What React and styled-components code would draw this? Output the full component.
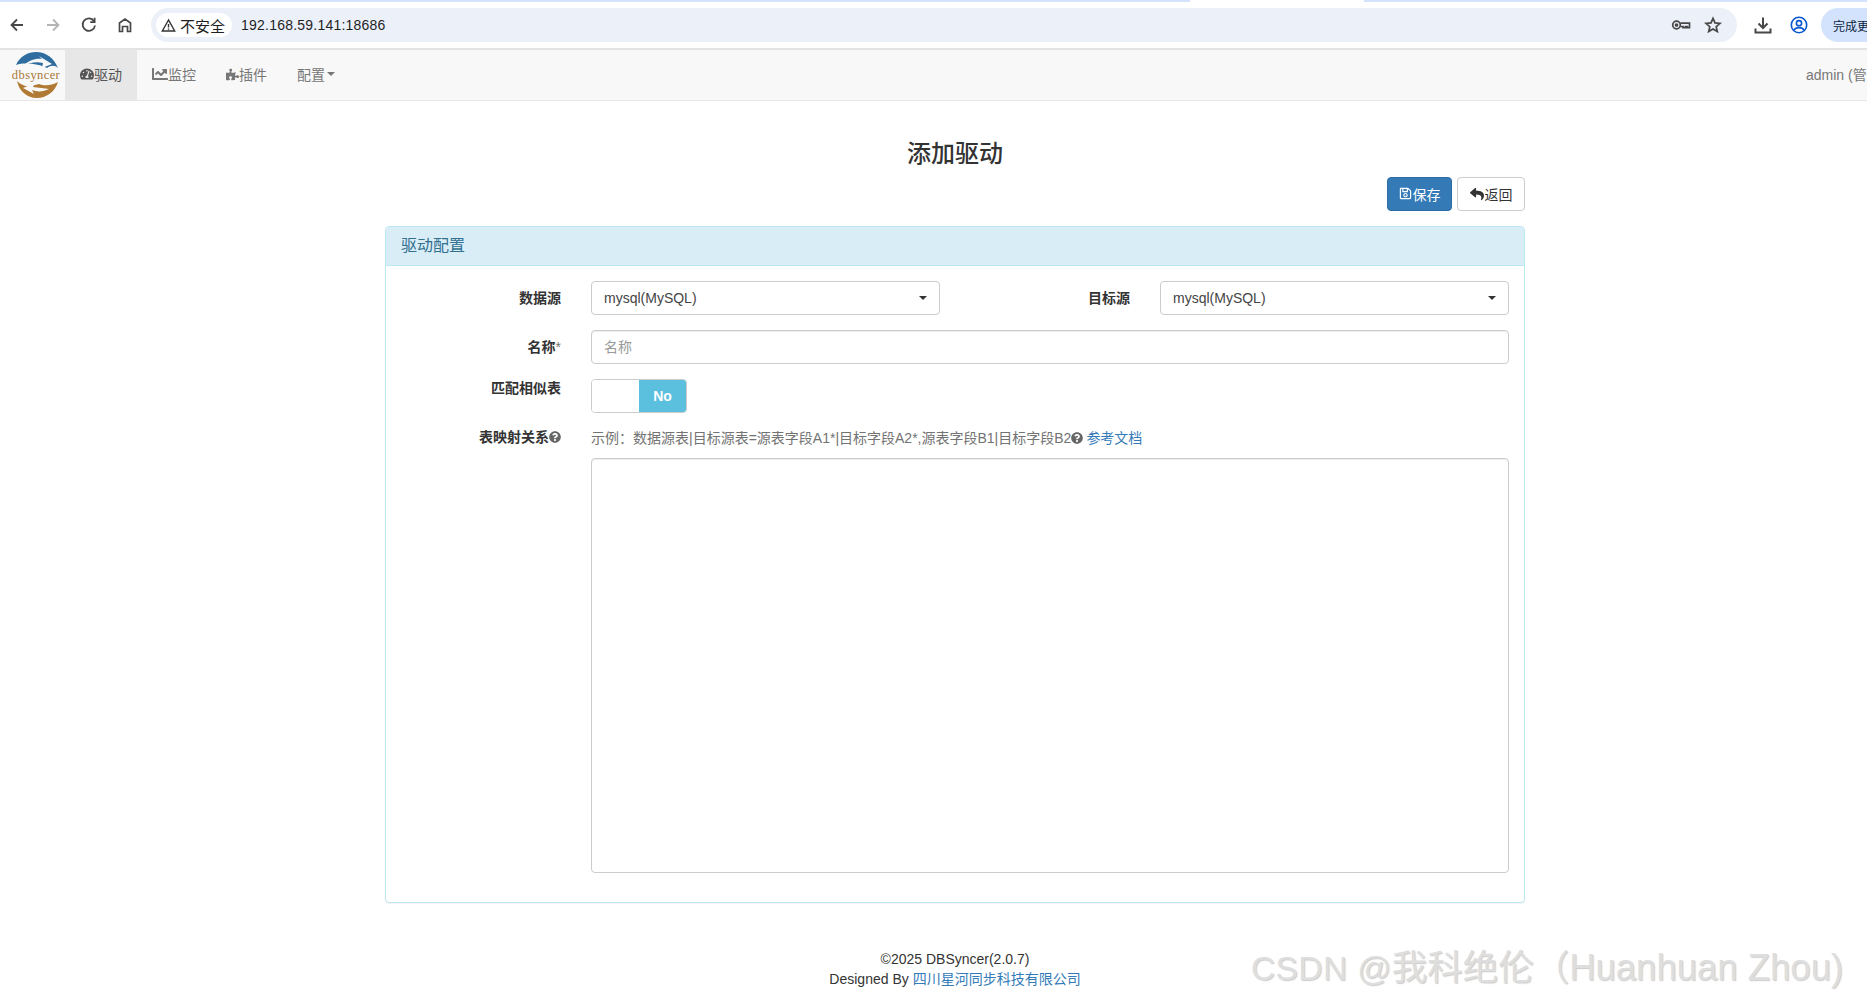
import React from "react";
import styled, { createGlobalStyle } from "styled-components";
import { FaTachometerAlt, FaChartLine, FaPuzzlePiece, FaRegSave, FaReply, FaQuestionCircle } from "react-icons/fa";

const FONT = `"Liberation Sans", "Noto Sans CJK SC", sans-serif`;

const GlobalStyle = createGlobalStyle`
  html, body {
    margin: 0;
    height: 1000px;
    overflow: hidden;
    background: #fff;
  }
  body {
    font-family: ${FONT};
    font-size: 14px;
    color: #333;
  }
  * {
    box-sizing: border-box;
  }
`;

const Page = styled.div`
  position: relative;
  width: 1867px;
  height: 1000px;
  overflow: hidden;
`;

/* browser chrome */
const TabStrip = styled.div`
  display: flex;
  height: 2px;
`;

const StripPart = styled.div`
  flex: ${(p) => p.$flex || "1"};
  background: ${(p) => p.$color || "#d3e3fd"};
`;

const Toolbar = styled.div`
  display: flex;
  align-items: center;
  height: 48px;
  border-bottom: 2px solid #e3e3e3;
  overflow: hidden;
`;

const NavButtons = styled.div`
  display: flex;
  margin-left: -1px;
`;

const ToolButton = styled.div`
  flex: 0 0 36px;
  display: flex;
  align-items: center;
  justify-content: center;
  color: ${(p) => p.$color || "#474747"};
`;

const AddressBar = styled.div`
  flex: 0 0 1586px;
  margin: 0 8px;
  height: 34px;
  border-radius: 17px;
  background: #ebf0f9;
  display: flex;
  align-items: center;
  padding: 0 8px 0 5px;
  color: #1f1f1f;
`;

const SecurityChip = styled.div`
  display: flex;
  align-items: center;
  gap: 4px;
  height: 24px;
  width: 76px;
  padding-left: 5px;
  border-radius: 12px;
  background: #fff;
  font-size: 15px;
  white-space: nowrap;
`;

const UrlText = styled.div`
  margin-left: 9px;
  font-size: 14px;
  letter-spacing: 0.22px;
  flex: 1;
`;

const AddressIcon = styled.div`
  width: 32px;
  display: flex;
  justify-content: center;
  color: #474747;
`;

const UpdatePill = styled.div`
  flex: 0 0 80px;
  height: 34px;
  margin-left: 4px;
  padding-left: 12px;
  display: flex;
  align-items: center;
  border-radius: 17px 0 0 17px;
  background: #d3e3fd;
  color: #0b1f3f;
  font-size: 12px;
  white-space: nowrap;
`;

/* app navbar */
const Navbar = styled.nav`
  display: flex;
  height: 51px;
  background: #f8f8f8;
  border-bottom: 1px solid #e7e7e7;
  overflow: hidden;
`;

const Brand = styled.div`
  flex: 0 0 65px;
  display: flex;
  align-items: center;
  padding-left: 11px;
`;

const NavItem = styled.div`
  display: flex;
  align-items: center;
  height: 50px;
  padding: 0 15px 2px;
  color: ${(p) => (p.$active ? "#555" : "#777")};
  background: ${(p) => (p.$active ? "#e7e7e7" : "transparent")};
  white-space: nowrap;
`;

const Caret = styled.span`
  width: 0;
  height: 0;
  margin-left: 2px;
  border-top: 4px solid #777;
  border-left: 4px solid transparent;
  border-right: 4px solid transparent;
`;

const UserName = styled.div`
  margin-left: auto;
  flex: 0 0 61px;
  min-width: 0;
  height: 50px;
  line-height: 50px;
  color: #777;
  white-space: nowrap;
`;

/* page */
const Main = styled.main`
  width: 1140px;
  margin-left: 385px;
`;

const Title = styled.h2`
  margin: 40px 0 0;
  font-size: 24px;
  font-weight: 500;
  line-height: 26px;
  text-align: center;
  color: #333;
`;

const Actions = styled.div`
  display: flex;
  justify-content: flex-end;
  gap: 5px;
  margin: 10px 0 15px;
`;

const Button = styled.button`
  display: flex;
  align-items: center;
  justify-content: center;
  gap: 1px;
  height: 34px;
  width: ${(p) => (p.$primary ? "65px" : "68px")};
  padding: 0 0 1px;
  border: 1px solid ${(p) => (p.$primary ? "#2e6da4" : "#ccc")};
  border-radius: 4px;
  background: ${(p) => (p.$primary ? "#337ab7" : "#fff")};
  color: ${(p) => (p.$primary ? "#fff" : "#333")};
  font-family: ${FONT};
  font-size: 14px;
`;

const Panel = styled.section`
  height: 677px;
  border: 1px solid #bce8f1;
  border-radius: 4px;
  background: #fff;
  box-shadow: 0 1px 1px rgba(0, 0, 0, 0.05);
`;

const PanelHeading = styled.div`
  height: 39px;
  padding: 0 0 4px 15px;
  display: flex;
  align-items: center;
  background: #d9edf7;
  border-bottom: 1px solid #bce8f1;
  border-radius: 3px 3px 0 0;
  color: #31708f;
  font-size: 16px;
`;

const PanelBody = styled.div`
  padding: 15px 15.5px 0 0;
  display: flex;
  flex-direction: column;
  gap: 15px;
`;

const Row = styled.div`
  display: flex;
  align-items: ${(p) => p.$align || "center"};
`;

const Label = styled.label`
  flex: 0 0 ${(p) => p.$width || "175px"};
  margin: -2px 30px 0 0;
  text-align: right;
  font-weight: 700;
  color: #333;
  white-space: nowrap;
`;

const Star = styled.span`
  font-weight: 400;
  color: #777;
`;

const Select = styled.div`
  flex: 0 0 ${(p) => p.$width || "auto"};
  flex-grow: ${(p) => (p.$width ? 0 : 1)};
  height: 34px;
  display: flex;
  align-items: center;
  justify-content: space-between;
  padding: 0 12px 0 12px;
  border: 1px solid #ccc;
  border-radius: 4px;
  color: #444;
`;

const SelectCaret = styled.span`
  width: 0;
  height: 0;
  border-top: 4px solid #333;
  border-left: 4px solid transparent;
  border-right: 4px solid transparent;
`;

const Input = styled.input`
  flex: 1;
  height: 34px;
  padding: 6px 12px;
  border: 1px solid #ccc;
  border-radius: 4px;
  font-family: ${FONT};
  font-size: 14px;
  box-shadow: inset 0 1px 1px rgba(0, 0, 0, 0.075);
  &::placeholder {
    color: #999;
  }
`;

const Switch = styled.div`
  display: flex;
  width: 96px;
  height: 34px;
  border: 1px solid #ccc;
  border-radius: 4px;
  overflow: hidden;
`;

const SwitchThumb = styled.div`
  flex: 0 0 47px;
  background: #fff;
`;

const SwitchOff = styled.div`
  flex: 1;
  display: flex;
  align-items: center;
  justify-content: center;
  background: #5bc0de;
  color: #fff;
  font-weight: 700;
`;

const MapBlock = styled.div`
  flex: 1;
  display: flex;
  flex-direction: column;
  gap: 10px;
`;

const Hint = styled.div`
  height: 20px;
  line-height: 20px;
  color: #737373;
  white-space: nowrap;
  display: flex;
  align-items: center;
`;

const HelpIcon = styled(FaQuestionCircle)`
  width: 12px;
  height: 12px;
  color: #666;
  vertical-align: -1px;
`;

const DocLink = styled.a`
  margin-left: 3px;
  color: #337ab7;
`;

const TextArea = styled.textarea`
  display: block;
  width: 100%;
  height: 415px;
  border: 1px solid #ccc;
  border-radius: 4px;
  resize: none;
  box-shadow: inset 0 1px 1px rgba(0, 0, 0, 0.075);
`;

const Footer = styled.footer`
  margin-top: 46px;
  text-align: center;
  line-height: 20px;
  color: #333;
`;

const FooterLink = styled.a`
  color: #337ab7;
`;

const Watermark = styled.div`
  position: absolute;
  left: 1251px;
  top: 946px;
  font-size: 33.5px;
  letter-spacing: 0.4px;
  line-height: 44px;
  color: #dedede;
  text-shadow: 1px 1px 1px rgba(110, 110, 110, 0.35);
  white-space: nowrap;
`;

const WatermarkCjk = styled.span`
  font-size: 35.5px;
  letter-spacing: 0;
`;

const WatermarkName = styled.span`
  font-size: 36.5px;
  letter-spacing: 0;
`;

const Logo = () => (
  <svg width="50" height="48" viewBox="0 0 50 48">
    <path d="M5 14C9 5 17 1 25 1c10 0 18 6 22 16-3-3-7-3-11 0-8-4-22-6-31-3z" fill="#2f6c9f" />
    <path d="M12 15c6-6 13-8 19-7l-3-3 13 8-10 4 1-5c-7-2-14 0-20 3z" fill="#f8f8f8" />
    <path d="M6 30c4 4 9 6 14 5l8-2c5 2 12 2 19-2-3 10-12 16-21 16-10 0-18-7-20-17z" fill="#b07a35" />
    <path d="M38 38c-6 3-12 3-17 1l2 4-11-6 12-5-2 4c5 1 11 1 16 2z" fill="#f8f8f8" />
    <text x="25" y="28" textAnchor="middle" fontFamily="Liberation Serif" fontSize="12.5" letterSpacing="0.4" fill="#a9773a">dbsyncer</text>
  </svg>
);

const BackIcon = ({ flip }) => (
  <svg width="18" height="18" viewBox="0 0 18 18" fill="none" stroke="currentColor" strokeWidth="1.8" transform={flip ? "scale(-1 1)" : undefined}>
    <path d="M15 9H3.500M9 3.500 3.500 9 9 14.500" />
  </svg>
);

const ReloadIcon = () => (
  <svg width="18" height="18" viewBox="0 0 18 18" fill="none" stroke="currentColor" strokeWidth="1.8">
    <path d="M14 5.200A6.200 6.200 0 1 0 15 9.500" />
    <path d="M14.600 1.800v4.400h-4.400" />
  </svg>
);

const HomeIcon = () => (
  <svg width="18" height="18" viewBox="0 0 18 18" fill="none" stroke="currentColor" strokeWidth="1.7">
    <path d="M3.500 15.500V7L9 3l5.500 4v8.500h-3V10.500h-5v5z" />
  </svg>
);

const WarnIcon = () => (
  <svg width="15" height="15" viewBox="0 0 15 15" fill="none" stroke="#333" strokeWidth="1.4">
    <path d="M7.500 2 1.300 13h12.400z" />
    <path d="M7.500 6v3.600M7.500 10.600v1.200" />
  </svg>
);

const KeyIcon = () => (
  <svg width="20" height="14" viewBox="0 0 20 14" fill="none" stroke="currentColor" strokeWidth="1.7">
    <circle cx="5.500" cy="7" r="3.800" />
    <circle cx="5.500" cy="7" r="1" fill="currentColor" />
    <path d="M9.300 5.200H18.500v4.500h-2.300V8.500h-1.700v1.200h-2.500V8.500H9.300" />
  </svg>
);

const StarIcon = () => (
  <svg width="18" height="18" viewBox="0 0 18 18" fill="none" stroke="currentColor" strokeWidth="1.7">
    <path d="m9 2.300 2 4.600 5 .5-3.800 3.300 1.100 4.900L9 13.100l-4.300 2.500 1.100-4.900L2 7.400l5-.5z" />
  </svg>
);

const DownloadIcon = () => (
  <svg width="18" height="18" viewBox="0 0 18 18" fill="none" stroke="currentColor" strokeWidth="2">
    <path d="M9 1.500v10M4.500 7.500 9 12l4.500-4.500M1.500 12.500v4h15v-4" />
  </svg>
);

const ProfileIcon = () => (
  <svg width="18" height="18" viewBox="0 0 18 18" fill="none" stroke="#0b57d0" strokeWidth="1.6">
    <circle cx="9" cy="9" r="7.700" />
    <circle cx="9" cy="7.200" r="2.600" />
    <path d="M3.800 14.300C5 12.200 7 11.600 9 11.600s4 .6 5.200 2.700" />
  </svg>
);

export default function App() {
  return (
    <Page>
      <GlobalStyle />
      <TabStrip>
        <StripPart $flex="0 0 1190px" />
        <StripPart $flex="0 0 174px" $color="#fff" />
        <StripPart />
      </TabStrip>
      <Toolbar>
        <NavButtons>
          <ToolButton><BackIcon /></ToolButton>
          <ToolButton $color="#b4b4b4"><BackIcon flip /></ToolButton>
          <ToolButton><ReloadIcon /></ToolButton>
          <ToolButton><HomeIcon /></ToolButton>
        </NavButtons>
        <AddressBar>
          <SecurityChip><WarnIcon />不安全</SecurityChip>
          <UrlText>192.168.59.141:18686</UrlText>
          <AddressIcon><KeyIcon /></AddressIcon>
          <AddressIcon><StarIcon /></AddressIcon>
        </AddressBar>
        <ToolButton><DownloadIcon /></ToolButton>
        <ToolButton><ProfileIcon /></ToolButton>
        <UpdatePill>完成更新</UpdatePill>
      </Toolbar>

      <Navbar>
        <Brand><Logo /></Brand>
        <NavItem $active><FaTachometerAlt size={14} />驱动</NavItem>
        <NavItem><FaChartLine size={16} />监控</NavItem>
        <NavItem><FaPuzzlePiece size={13} />插件</NavItem>
        <NavItem>配置<Caret /></NavItem>
        <UserName>admin (管理员)</UserName>
      </Navbar>

      <Main>
        <Title>添加驱动</Title>
        <Actions>
          <Button $primary><FaRegSave size={13} />保存</Button>
          <Button><FaReply size={14} />返回</Button>
        </Actions>
        <Panel>
          <PanelHeading>驱动配置</PanelHeading>
          <PanelBody>
            <Row>
              <Label>数据源</Label>
              <Select $width="348.5px">mysql(MySQL)<SelectCaret /></Select>
              <Label $width="190.5px">目标源</Label>
              <Select>mysql(MySQL)<SelectCaret /></Select>
            </Row>
            <Row>
              <Label>名称<Star>*</Star></Label>
              <Input placeholder="名称" />
            </Row>
            <Row $align="flex-start">
              <Label>匹配相似表</Label>
              <Switch>
                <SwitchThumb />
                <SwitchOff>No</SwitchOff>
              </Switch>
            </Row>
            <Row $align="flex-start">
              <Label>表映射关系<HelpIcon /></Label>
              <MapBlock>
                <Hint>
                  示例：数据源表|目标源表=源表字段A1*|目标字段A2*,源表字段B1|目标字段B2<HelpIcon />
                  <DocLink>参考文档</DocLink>
                </Hint>
                <TextArea />
              </MapBlock>
            </Row>
          </PanelBody>
        </Panel>
        <Footer>
          ©2025 DBSyncer(2.0.7)
          <br />
          Designed By <FooterLink>四川星河同步科技有限公司</FooterLink>
        </Footer>
      </Main>
      <Watermark>CSDN @<WatermarkCjk>我科绝伦（</WatermarkCjk><WatermarkName>Huanhuan Zhou)</WatermarkName></Watermark>
    </Page>
  );
}
